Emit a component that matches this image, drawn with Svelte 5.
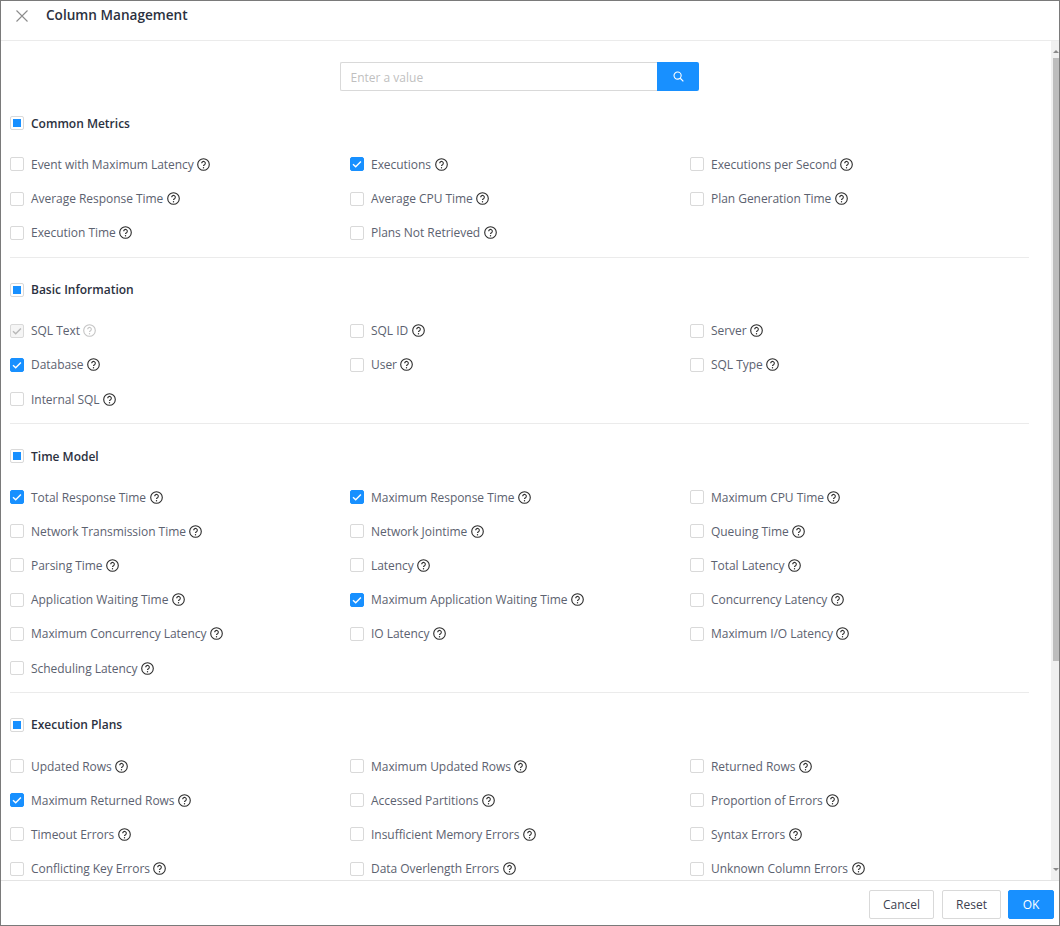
<script lang="ts">
  interface Item {
    label: string;
    checked?: boolean;
    disabled?: boolean;
  }

  const sections: { title: string; items: Item[] }[] = [
    {
      title: 'Common Metrics',
      items: [
        { label: 'Event with Maximum Latency' },
        { label: 'Executions', checked: true },
        { label: 'Executions per Second' },
        { label: 'Average Response Time' },
        { label: 'Average CPU Time' },
        { label: 'Plan Generation Time' },
        { label: 'Execution Time' },
        { label: 'Plans Not Retrieved' }
      ]
    },
    {
      title: 'Basic Information',
      items: [
        { label: 'SQL Text', checked: true, disabled: true },
        { label: 'SQL ID' },
        { label: 'Server' },
        { label: 'Database', checked: true },
        { label: 'User' },
        { label: 'SQL Type' },
        { label: 'Internal SQL' }
      ]
    },
    {
      title: 'Time Model',
      items: [
        { label: 'Total Response Time', checked: true },
        { label: 'Maximum Response Time', checked: true },
        { label: 'Maximum CPU Time' },
        { label: 'Network Transmission Time' },
        { label: 'Network Jointime' },
        { label: 'Queuing Time' },
        { label: 'Parsing Time' },
        { label: 'Latency' },
        { label: 'Total Latency' },
        { label: 'Application Waiting Time' },
        { label: 'Maximum Application Waiting Time', checked: true },
        { label: 'Concurrency Latency' },
        { label: 'Maximum Concurrency Latency' },
        { label: 'IO Latency' },
        { label: 'Maximum I/O Latency' },
        { label: 'Scheduling Latency' }
      ]
    },
    {
      title: 'Execution Plans',
      items: [
        { label: 'Updated Rows' },
        { label: 'Maximum Updated Rows' },
        { label: 'Returned Rows' },
        { label: 'Maximum Returned Rows', checked: true },
        { label: 'Accessed Partitions' },
        { label: 'Proportion of Errors' },
        { label: 'Timeout Errors' },
        { label: 'Insufficient Memory Errors' },
        { label: 'Syntax Errors' },
        { label: 'Conflicting Key Errors' },
        { label: 'Data Overlength Errors' },
        { label: 'Unknown Column Errors' }
      ]
    }
  ];
</script>

<div class="drawer">
  <header class="head">
    <svg class="close" viewBox="0 0 12 12" width="12" height="12">
      <path d="M.5.5l11 11M11.5.5l-11 11" fill="none" stroke="#8c8c8c" stroke-width="1.1" />
    </svg>
    <span class="head-title">Column Management</span>
  </header>

  <div class="body">
    <div class="search">
      <div class="search-input">Enter a value</div>
      <button class="search-btn" aria-label="Search">
        <svg viewBox="0 0 12 12" width="11" height="11">
          <circle cx="5" cy="5" r="3.9" fill="none" stroke="#fff" stroke-width="1.2" />
          <path d="M7.9 7.9l3.4 3.4" fill="none" stroke="#fff" stroke-width="1.3" />
        </svg>
      </button>
    </div>

    {#each sections as section, i}
      <section class="section" class:first={i === 0}>
        <div class="section-title">
          <span class="box partial"></span>
          <span>{section.title}</span>
        </div>
        <div class="grid">
          {#each section.items as item}
            <div class="item" class:disabled={item.disabled}>
              <span class="box" class:checked={item.checked}>
                {#if item.checked}
                  <svg viewBox="0 0 16 16" width="16" height="16">
                    <path d="M4 8.2l2.7 2.6 5.2-5.4" fill="none" stroke={item.disabled ? '#b8b8b8' : '#fff'} stroke-width="1.4" />
                  </svg>
                {/if}
              </span>
              <span class="label">{item.label}</span>
              <svg class="help" viewBox="0 0 13 13" width="13" height="13">
                <circle cx="6.5" cy="6.5" r="5.8" fill="none" stroke="currentColor" stroke-width="1.1" />
                <path d="M4.7 5.2a1.8 1.8 0 1 1 2.8 1.5c-.7.4-1 .7-1 1.3" fill="none" stroke="currentColor" stroke-width="1.1" />
                <circle cx="6.5" cy="9.7" r=".7" fill="currentColor" />
              </svg>
            </div>
          {/each}
        </div>
      </section>
    {/each}

    <div class="scrollbar">
      <span class="arrow up"></span>
      <span class="thumb"></span>
      <span class="arrow down"></span>
    </div>
  </div>

  <footer class="foot">
    <button class="btn">Cancel</button>
    <button class="btn">Reset</button>
    <button class="btn primary">OK</button>
  </footer>
</div>

<style>
  :global(body) {
    margin: 0;
    background: #fff;
  }

  .drawer {
    box-sizing: border-box;
    display: flex;
    flex-direction: column;
    width: 1060px;
    height: 926px;
    border: 1px solid #7a7a7a;
    font-family: "Open Sans", "Noto Sans", sans-serif;
    font-size: 12px;
    color: #5c6270;
    overflow: hidden;
  }

  .head {
    display: flex;
    align-items: center;
    flex: none;
    height: 40px;
    box-sizing: border-box;
    border-bottom: 1px solid #ebebeb;
    padding: 0 0 12px 15px;
  }

  .close {
    margin-right: 18px;
    margin-top: 2px;
  }

  .head-title {
    font-size: 13.6px;
    font-weight: 600;
    color: #2b3140;
  }

  .body {
    position: relative;
    flex: 1;
    overflow: hidden;
    padding: 21px 0 0 9px;
  }

  .search {
    display: flex;
    width: 359px;
    height: 29px;
    margin: 0 0 0 330px;
  }

  .search-input {
    flex: 1;
    box-sizing: border-box;
    border: 1px solid #d9d9d9;
    border-right: 0;
    border-radius: 2px 0 0 2px;
    padding-left: 9.5px;
    line-height: 29px;
    color: #bfbfbf;
  }

  .search-btn {
    display: flex;
    align-items: center;
    justify-content: center;
    width: 42px;
    padding: 0;
    border: 0;
    border-radius: 0 2px 2px 0;
    background: #1890ff;
  }

  .section {
    width: 1019px;
    border-bottom: 1px solid #ebebeb;
    padding-top: 22.3px;
    padding-bottom: 7px;
  }

  .section.first {
    padding-top: 22.8px;
  }

  .section-title {
    display: flex;
    align-items: center;
    height: 19px;
    font-weight: 600;
    color: #2b3140;
  }

  .grid {
    display: grid;
    grid-template-columns: repeat(3, 340px);
    grid-auto-rows: 34.2px;
    padding-top: 14.5px;
  }

  .item {
    display: flex;
    align-items: center;
    white-space: nowrap;
    letter-spacing: -0.04px;
  }

  .box {
    flex: none;
    display: block;
    position: relative;
    box-sizing: border-box;
    width: 14px;
    height: 14px;
    margin-right: 7px;
    border: 1px solid #d9d9d9;
    border-radius: 2px;
    background: #fff;
  }

  .box svg {
    position: absolute;
    left: -2px;
    top: -2px;
  }

  .box.checked {
    border-color: #1890ff;
    background: #1890ff;
  }

  .box.partial::after {
    content: '';
    position: absolute;
    left: 2px;
    top: 2px;
    width: 8px;
    height: 8px;
    background: #1890ff;
  }

  .disabled .box.checked {
    border-color: #d9d9d9;
    background: #f5f5f5;
  }

  .help {
    margin-left: 3.5px;
    color: #2b2b2b;
  }

  .disabled .help {
    color: #c4c4c4;
  }

  .scrollbar {
    position: absolute;
    top: 0;
    right: 0;
    bottom: 0;
    display: flex;
    flex-direction: column;
    align-items: flex-end;
    width: 8px;
    background: #f0f0f0;
  }

  .thumb {
    width: 6px;
    height: 603px;
    margin-top: 5px;
    background: #bdbdbd;
  }

  .arrow {
    width: 0;
    height: 0;
    border-left: 3px solid transparent;
    border-right: 3px solid transparent;
  }

  .arrow.up {
    margin-top: 9px;
    border-bottom: 3px solid #8a8a8a;
  }

  .arrow.down {
    margin-top: auto;
    margin-bottom: 9px;
    border-top: 3px solid #8a8a8a;
  }

  .foot {
    display: flex;
    flex: none;
    justify-content: flex-end;
    gap: 8px;
    height: 45px;
    box-sizing: border-box;
    border-top: 1px solid #e4e4e4;
    padding: 9px 5px 0 0;
  }

  .btn {
    height: 29px;
    padding: 0 13px;
    border: 1px solid #d9d9d9;
    border-radius: 2px;
    background: #fff;
    font: inherit;
    color: #3c4150;
  }

  .btn.primary {
    width: 46px;
    margin-left: -1px;
    border-color: #1890ff;
    background: #1890ff;
    color: #fff;
  }
</style>
